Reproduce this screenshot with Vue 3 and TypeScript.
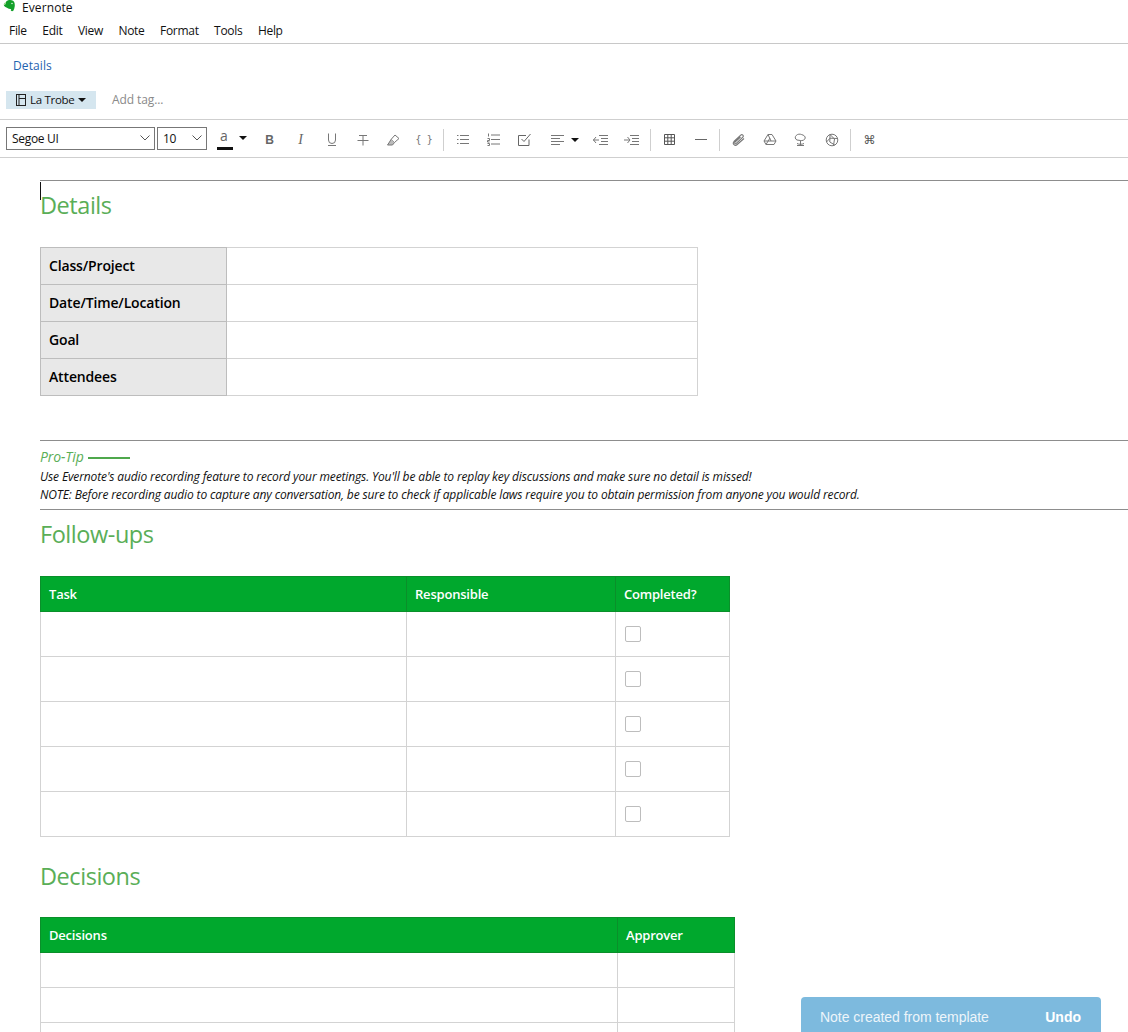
<script setup lang="ts">
const menus: string[] = ['File', 'Edit', 'View', 'Note', 'Format', 'Tools', 'Help']
const detailRows: string[] = ['Class/Project', 'Date/Time/Location', 'Goal', 'Attendees']
const followRows: number[] = [1, 2, 3, 4, 5]
const decisionRows: number[] = [1, 2, 3]
</script>

<template>
  <div class="page">
    <header class="titlebar">
      <svg class="logo" width="13" height="13" viewBox="0 0 13 13">
        <path d="M3 2C4 0 8 -.5 10 .8c1.600 1.100 2 3.500 1.700 5.700-.2 1.500-.6 3-1.400 4.200-.8.700-1.900.6-2.400-.2-.3-.6-.1-1.300.5-1.600-1.400.2-3 0-4-.8C3.200 7.200 1.500 6.700.8 5.200L3 3.400z" fill="#13a02a" />
        <path d="M.4 4.600 2.700 1.800v2.800z" fill="#7fcc6f" />
        <circle cx="9" cy="3.500" r=".8" fill="#d8f0d8" />
      </svg>
      <span>Evernote</span>
    </header>
    <nav class="menubar">
      <span v-for="m in menus" :key="m">{{ m }}</span>
    </nav>
    <div class="titleline"><a class="notetitle">Details</a></div>
    <div class="metaline">
      <div class="notebook">
        <svg width="10" height="12" viewBox="0 0 10 12" fill="none" stroke="#222">
          <rect x=".5" y=".5" width="9" height="11" />
          <path d="M3 .5v11M3 4.500h6.500" />
        </svg>
        <span>La Trobe</span>
        <i class="caret"></i>
      </div>
      <span class="addtag">Add tag...</span>
    </div>
    <div class="toolbar">
      <div class="select fontsel">
        <span>Segoe UI</span>
        <svg width="10" height="6" viewBox="0 0 10 6" fill="none" stroke="#555"><path d="M.5.5 5 5 9.500.5" /></svg>
      </div>
      <div class="select sizesel">
        <span>10</span>
        <svg width="10" height="6" viewBox="0 0 10 6" fill="none" stroke="#555"><path d="M.5.5 5 5 9.500.5" /></svg>
      </div>
      <div class="tool colorbtn">
        <span class="colora">a</span>
        <i class="colorbar"></i>
        <i class="caret"></i>
      </div>
      <div class="tool glyph bold">B</div>
      <div class="tool glyph italic">I</div>
      <div class="tool">
        <svg width="10" height="13" viewBox="0 0 10 13" fill="none" stroke="#777"><path d="M1.500 .5v6.500a3.500 3.500 0 0 0 7 0V.5M1 12.500h8" /></svg>
      </div>
      <div class="tool">
        <svg width="12" height="12" viewBox="0 0 12 12" fill="none" stroke="#777"><path d="M2 1.500h8M6 1.500v10M.5 6.500h11" /></svg>
      </div>
      <div class="tool">
        <svg width="13" height="12" viewBox="0 0 13 12" fill="none" stroke="#777"><path d="M8 1 12 4.500 7.500 8.500 4 5.500z" /><path d="M4 5.500 2.500 8 .5 11h5l2-2.500" fill="#bbb" /></svg>
      </div>
      <div class="tool glyph braces">{ }</div>
      <i class="sep"></i>
      <div class="tool">
        <svg width="12" height="11" viewBox="0 0 12 11" fill="none" stroke="#777"><path d="M3 1.500h9M3 5.500h9M3 9.500h9M0 1.500h1.500M0 5.500h1.500M0 9.500h1.500" /></svg>
      </div>
      <div class="tool">
        <svg width="13" height="13" viewBox="0 0 13 13" fill="none" stroke="#777"><path d="M4 2h9M4 6.500h9M4 11h9M1.500 .5v3M.5 5.500h2v2h-2v1.500h2M.5 10.500h2v2h-2" /></svg>
      </div>
      <div class="tool">
        <svg width="13" height="13" viewBox="0 0 13 13" fill="none" stroke="#666"><path d="M11 6.500v6H.5v-10H8" /><path d="M3.500 6 6 8.500 12.500 1" /></svg>
      </div>
      <div class="tool aligngroup">
        <svg width="13" height="12" viewBox="0 0 13 12" fill="none" stroke="#777"><path d="M0 1.500h13M0 4.500h9M0 7.500h13M0 10.500h9" /></svg>
        <i class="caret"></i>
      </div>
      <div class="tool">
        <svg width="15" height="12" viewBox="0 0 15 12" fill="none" stroke="#777"><path d="M6 1.500h9M8 4.500h7M8 7.500h7M6 10.500h9M0 6h6M3 3 .5 6 3 9" /></svg>
      </div>
      <div class="tool">
        <svg width="15" height="12" viewBox="0 0 15 12" fill="none" stroke="#777"><path d="M6 1.500h9M8 4.500h7M8 7.500h7M6 10.500h9M0 6h6M3.500 3 6 6 3.500 9" /></svg>
      </div>
      <i class="sep"></i>
      <div class="tool">
        <svg width="11" height="11" viewBox="0 0 11 11" fill="none" stroke="#555"><path d="M.5.500h10v10H.5zM.5 3.800h10M.5 7.200h10M3.800.5v10M7.200.5v10" /></svg>
      </div>
      <div class="tool">
        <svg width="12" height="3" viewBox="0 0 12 3" fill="none" stroke="#666"><path d="M0 1.500h12" /></svg>
      </div>
      <i class="sep"></i>
      <div class="tool">
        <svg width="13" height="12" viewBox="0 0 13 12" fill="none" stroke="#777" stroke-width="1.100"><path d="M8.500 3 3 8.200c-.8 1 .4 2 1.300 1.200l6.500-6.200c1.400-1.500-.6-3.300-2.100-2L2 7.500C0 9.800 3 12.600 5.200 10.500L12 4.500" /></svg>
      </div>
      <div class="tool">
        <svg width="14" height="13" viewBox="0 0 14 13" fill="none" stroke="#777"><path d="M5 1.500h4L13 8l-2 3.500H3L1 8zM5 1.500 8 8h5M1 8h7M3 11.500 7 5" /></svg>
      </div>
      <div class="tool">
        <svg width="13" height="14" viewBox="0 0 13 14" fill="none" stroke="#777"><path d="M3 7c-2-.8-2.300-3.300-.8-4.500C3.500 1 6 .8 7.700 1.600c2 .5 3.800 1.800 3.500 3.500C11 7 8 8 6.500 7.500L3 7z" /><path d="M6.500 7.500v5M3 12.500h7M3 10.500c2 1 5 1 7 0" /></svg>
      </div>
      <div class="tool">
        <svg width="14" height="14" viewBox="0 0 14 14" fill="none" stroke="#777"><circle cx="7" cy="7" r="5.800" /><path d="M5 1.500 9.500 6 8.500 12.500M12.500 5.500 5 5.200 1.500 9M9.800 12 4.800 9 5 1.500" /></svg>
      </div>
      <i class="sep"></i>
      <div class="tool glyph cmd">⌘</div>
    </div>

    <main class="editor">
      <hr class="rule first" />
      <i class="cursor"></i>
      <h2 class="h-details">Details</h2>
      <table class="tbl details">
        <colgroup><col class="d1" /><col /></colgroup>
        <tbody>
          <tr v-for="r in detailRows" :key="r">
            <th>{{ r }}</th>
            <td></td>
          </tr>
        </tbody>
      </table>

      <hr class="rule tiptop" />
      <div class="tip">
        <div class="tiphead"><em>Pro-Tip</em><i class="tipdash"></i></div>
        <p>Use Evernote's audio recording feature to record your meetings. You'll be able to replay key discussions and make sure no detail is missed!</p>
        <p>NOTE: Before recording audio to capture any conversation, be sure to check if applicable laws require you to obtain permission from anyone you would record.</p>
      </div>
      <hr class="rule tipbottom" />

      <h2 class="h-follow">Follow-ups</h2>
      <table class="tbl green follow">
        <colgroup><col class="f1" /><col class="f2" /><col /></colgroup>
        <thead>
          <tr><th>Task</th><th>Responsible</th><th>Completed?</th></tr>
        </thead>
        <tbody>
          <tr v-for="n in followRows" :key="n">
            <td></td>
            <td></td>
            <td><i class="check"></i></td>
          </tr>
        </tbody>
      </table>

      <h2 class="h-decisions">Decisions</h2>
      <table class="tbl green decisions">
        <colgroup><col class="g1" /><col /></colgroup>
        <thead>
          <tr><th>Decisions</th><th>Approver</th></tr>
        </thead>
        <tbody>
          <tr v-for="n in decisionRows" :key="n">
            <td></td>
            <td></td>
          </tr>
        </tbody>
      </table>
    </main>

    <div class="toast">
      <span>Note created from template</span>
      <b>Undo</b>
    </div>
  </div>
</template>

<style>
html, body { margin: 0; background: #fff; overflow: hidden; }
</style>

<style scoped>
.page {
  position: relative;
  width: 1128px;
  height: 1032px;
  overflow: hidden;
  background: #fff;
  color: #111;
  font-family: "Open Sans", "Noto Sans", sans-serif;
  font-size: 12px;
}
.titlebar {
  height: 15px;
  display: flex;
  align-items: center;
  gap: 6px;
  padding-left: 3px;
  font-size: 12px;
  letter-spacing: .1px;
}
.logo { flex: none; margin-top: -2px; }
.menubar {
  height: 29px;
  box-sizing: border-box;
  border-bottom: 1px solid #c8c8c8;
  display: flex;
  gap: 15.500px;
  align-items: center;
  padding: 3px 0 0 9px;
  letter-spacing: -.3px;
}
.titleline {
  height: 43px;
  display: flex;
  align-items: center;
  padding-left: 13px;
}
.notetitle { color: #1f64b0; font-size: 12px; letter-spacing: .1px; }
.metaline {
  height: 33px;
  padding: 4px 0 0 6px;
  box-sizing: border-box;
  display: flex;
  align-items: flex-start;
  border-bottom: 1px solid #cfcfcf;
}
.notebook {
  width: 90px;
  height: 18px;
  box-sizing: border-box;
  background: #d5e6ef;
  display: flex;
  align-items: center;
  gap: 4px;
  padding: 0 0 1px 10px;
  font-size: 11.500px;
  letter-spacing: -.3px;
}
.caret {
  display: block;
  width: 0;
  height: 0;
  border-left: 4px solid transparent;
  border-right: 4px solid transparent;
  border-top: 4px solid #111;
}
.addtag { margin: 0 0 0 16px; line-height: 18px; color: #8a8a8a; letter-spacing: -.1px; }
.toolbar {
  height: 38px;
  box-sizing: border-box;
  border-bottom: 1px solid #cfcfcf;
  display: flex;
  align-items: center;
  padding: 0 0 0 6px;
}
.select {
  height: 23px;
  box-sizing: border-box;
  border: 1px solid #777;
  display: flex;
  align-items: center;
  justify-content: space-between;
  padding: 0 4px 1px 5px;
  letter-spacing: -.3px;
}
.fontsel { width: 149px; }
.sizesel { width: 50px; margin-left: 2px; padding-left: 5px; }
.tool {
  flex: none;
  width: 31px;
  height: 24px;
  margin-top: 2px;
  display: flex;
  align-items: center;
  justify-content: center;
  color: #666;
}
.colorbtn {
  position: relative;
  width: 40px;
  margin-left: 7px;
  margin-top: 0;
  justify-content: flex-start;
}
.colora { position: absolute; left: 6px; top: 0; font-size: 14px; line-height: 18px; color: #666; }
.colorbar { position: absolute; left: 3px; top: 20px; width: 16px; height: 3px; background: #111; }
.colorbtn .caret { position: absolute; left: 25px; top: 9px; }
.bold { font-weight: 700; font-size: 12px; font-family: "Liberation Sans", sans-serif; }
.italic { font-style: italic; font-family: "Liberation Serif", serif; font-size: 14px; }
.braces { font-size: 10px; font-family: "DejaVu Sans", sans-serif; letter-spacing: .8px; color: #777; }
.cmd { font-size: 12px; font-family: "DejaVu Sans", sans-serif; color: #555; }
.aligngroup { width: 45px; justify-content: flex-start; padding-left: 11px; box-sizing: border-box; gap: 7px; }
.sep { flex: none; width: 1px; height: 22px; margin: 2px 3px 0; background: #cfcfcf; }
.editor { padding-left: 40px; }
.rule { margin: 0; border: 0; height: 1px; background: #8d8d8d; }
.rule.first { margin-top: 22px; }
.cursor { position: absolute; left: 40px; top: 182px; width: 1px; height: 18px; background: #111; }
h2 {
  margin: 0;
  font-weight: 400;
  font-size: 23.500px;
  line-height: 30px;
  letter-spacing: -.45px;
  color: #5aae57;
}
.h-details { margin-top: 9px; }
.h-follow { margin-top: 9px; }
.h-decisions { margin-top: 24px; }
.tbl {
  border-collapse: collapse;
  table-layout: fixed;
  border: 1px solid #d3d3d3;
}
.tbl th, .tbl td {
  padding: 0 8px;
  border: 1px solid #d3d3d3;
  box-sizing: border-box;
  text-align: left;
}
.details { width: 658px; margin-top: 27px; }
.d1 { width: 186px; }
.details tr { height: 37px; }
.details th {
  background: #e8e8e8;
  border-color: #bdbdbd;
  font-size: 14px;
  font-weight: 600;
  color: #000;
  letter-spacing: -.15px;
  padding-bottom: 2px;
}
.details td { border-color: #d3d3d3; }
.rule.tiptop { margin-top: 44px; }
.tip { padding-top: 7px; height: 68px; box-sizing: border-box; }
.tiphead { display: flex; align-items: center; gap: 4px; height: 17px; color: #5aae57; }
.tiphead em { font-size: 14px; letter-spacing: -.1px; }
.tipdash { width: 42px; height: 2px; margin-top: 3px; background: #4fa84c; }
.tip p {
  margin: 0;
  font-size: 12px;
  line-height: 17px;
  font-style: italic;
  letter-spacing: -.13px;
  white-space: nowrap;
  color: #111;
}
.tiphead + p { margin-top: 3px; }
.tip p + p { margin-top: 1px; }
.green { margin-top: 27px; }
.green thead tr { height: 35px; }
.green thead th {
  background: #00a82d;
  color: #fff;
  font-size: 13px;
  font-weight: 600;
  letter-spacing: -.2px;
  border-color: #0a8f2a;
}
.decisions { margin-top: 26px; }
.follow { width: 690px; }
.f1 { width: 366px; }
.f2 { width: 209px; }
.follow tbody tr { height: 45px; }
.check {
  display: block;
  width: 14px;
  height: 14px;
  margin-left: 1px;
  border: 1px solid #bdbdbd;
  border-radius: 2px;
}
.decisions { width: 695px; }
.g1 { width: 577px; }
.decisions tbody tr { height: 35px; }
.toast {
  position: absolute;
  left: 801px;
  top: 997px;
  width: 300px;
  height: 35px;
  box-sizing: border-box;
  padding: 4px 20px 0 19px;
  border-radius: 4px 4px 0 0;
  background: #7dbade;
  color: #edf5fa;
  display: flex;
  align-items: center;
  justify-content: space-between;
  font-family: "Liberation Sans", Arial, sans-serif;
  font-size: 14px;
  letter-spacing: -.03px;
}
.toast b { letter-spacing: 0; color: #fff; }
</style>
